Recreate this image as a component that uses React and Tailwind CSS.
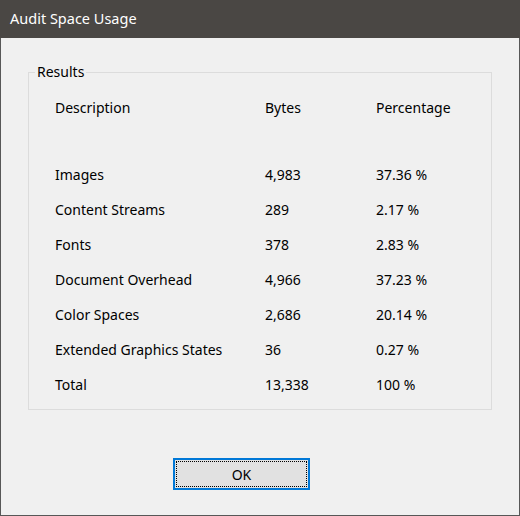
import React from "react";

const rows = [
  ["Images", "4,983", "37.36 %"],
  ["Content Streams", "289", "2.17 %"],
  ["Fonts", "378", "2.83 %"],
  ["Document Overhead", "4,966", "37.23 %"],
  ["Color Spaces", "2,686", "20.14 %"],
  ["Extended Graphics States", "36", "0.27 %"],
  ["Total", "13,338", "100 %"],
];

const App = () => {
  return (
    <div
      className="w-[520px] h-[516px] flex flex-col text-[14px] text-[#000] bg-[#f0f0f0]"
      style={{ fontFamily: '"Noto Sans", "Segoe UI", sans-serif' }}
    >
      <div className="h-[38px] shrink-0 bg-[#4a4744] text-white flex items-center pl-[10px] text-[14.5px]">
        Audit Space Usage
      </div>
      <div className="flex-1 border-x border-b border-[#575757] flex flex-col">
        <fieldset className="mt-[24px] ml-[27px] w-[464px] border border-[#dcdcdc] pb-[7px]">
          <legend className="ml-[6px] px-[2px] leading-[20px]">Results</legend>
          <div className="grid grid-cols-[210px_111px_1fr] pl-[26px] mt-[8px]">
            <div className="h-[35px] col-span-3 grid grid-cols-subgrid items-center mb-[32px]">
              <span>Description</span>
              <span>Bytes</span>
              <span>Percentage</span>
            </div>
            {rows.map((r, i) => (
              <div key={i} className="h-[35px] col-span-3 grid grid-cols-subgrid items-center">
                <span>{r[0]}</span>
                <span>{r[1]}</span>
                <span>{r[2]}</span>
              </div>
            ))}
          </div>
        </fieldset>
        <button className="mt-[48px] ml-[172px] w-[137px] h-[32px] bg-[#e1e1e1] border-2 border-[#0078d7] p-[1px]">
          <span className="flex h-full w-full items-center justify-center border border-dotted border-[#000]">
            OK
          </span>
        </button>
      </div>
    </div>
  );
};

export default App;
